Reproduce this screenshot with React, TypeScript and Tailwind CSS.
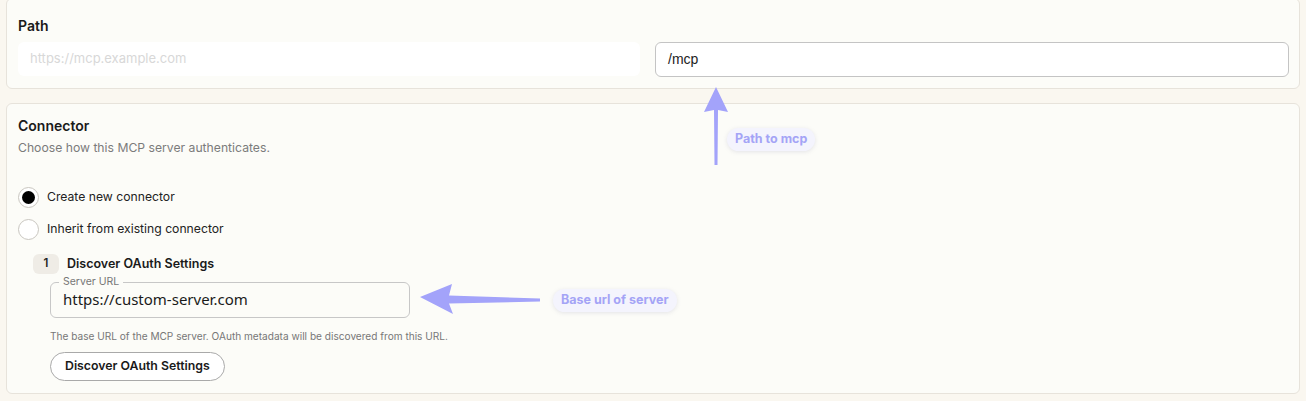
import React from 'react';

const font = { fontFamily: 'Inter, "Noto Sans", sans-serif' };

const Radio: React.FC<{ checked?: boolean; label: string }> = ({ checked, label }) => (
    <label className="flex items-center gap-[8px] h-[20px]">
        <span className="w-[21px] h-[21px] rounded-full border border-[#c9c6c0] bg-white flex items-center justify-center">
            {checked && <span className="w-[13px] h-[13px] rounded-full bg-black" />}
        </span>
        <span className="text-[12.2px] text-[#222]">{label}</span>
    </label>
);

const Note: React.FC<{ text: string; className: string }> = ({ text, className }) => (
    <div className={`absolute px-2 h-[23px] flex items-center rounded-full bg-[#f4f4fd] shadow-[0_1px_4px_rgba(120,120,160,0.18)] text-[12.5px] font-bold text-[#a4a4f6] ${className}`}>
        {text}
    </div>
);

const App: React.FC = () => {
    return (
        <div className="relative w-[1306px] h-[401px] overflow-hidden bg-[#faf7f0] px-[6px]" style={font}>
            {/* Path card */}
            <section className="-mt-[2px] border border-[#e7e3db] rounded-md bg-[#fcfcf8] pl-[11px] pr-[10px] pt-[19px] pb-[11px]">
                <h3 className="text-[14px] font-semibold text-[#1a1a1a] leading-[16px]">Path</h3>
                <div className="mt-[8px] flex gap-[15px]">
                    <div className="w-[622px] h-[34px] rounded-md bg-white flex items-center px-3 text-[13px] text-[#d8d8d8]">
                        https://mcp.example.com
                    </div>
                    <div className="flex-1 h-[35px] rounded-md border border-[#c4c4c4] bg-white flex items-center px-3 text-[14px] text-[#222]" style={{ fontFamily: '"Liberation Sans", Arial, sans-serif' }}>
                        /mcp
                    </div>
                </div>
            </section>

            {/* Connector card */}
            <section className="mt-[14px] border border-[#e7e3db] rounded-md bg-[#fcfcf8] px-[11px] pt-[14px] pb-[12px]">
                <h3 className="text-[14px] font-semibold text-[#1a1a1a] leading-[16px]">Connector</h3>
                <p className="mt-[6px] text-[12.2px] text-[#7b7b7b] leading-[16px]">Choose how this MCP server authenticates.</p>

                <div className="mt-[31px] flex flex-col gap-[12px]">
                    <Radio checked label="Create new connector" />
                    <Radio label="Inherit from existing connector" />
                </div>

                <div className="mt-[15px] pl-[15px]">
                    <div className="flex items-center gap-2">
                        <span className="w-[26px] h-[20px] rounded-md bg-[#efece6] flex items-center justify-center text-[11.5px] font-semibold text-[#222]">1</span>
                        <span className="text-[12.5px] font-semibold text-[#1a1a1a]">Discover OAuth Settings</span>
                    </div>

                    <div className="pl-[17px]">
                        <fieldset className="w-[360px] h-[42px] mt-[2px] border border-[#c7c7c7] rounded-md px-[8px]">
                            <legend className="px-[4px] text-[10.5px] text-[#777] leading-[12px]">Server URL</legend>
                            <div className="pl-[4px] text-[15px] text-[#1a1a1a]" style={{ fontFamily: '"Noto Sans", sans-serif' }}>
                                https://custom-server.com
                            </div>
                        </fieldset>
                        <p className="mt-[11px] text-[10.1px] text-[#777] leading-[14px]">
                            The base URL of the MCP server. OAuth metadata will be discovered from this URL.
                        </p>
                        <button className="mt-[9px] h-[29px] px-[14px] rounded-full border border-[#a9a9a9] bg-white text-[12.3px] font-semibold text-[#1a1a1a]">
                            Discover OAuth Settings
                        </button>
                    </div>
                </div>
            </section>

            {/* annotation arrows */}
            <svg className="absolute left-0 top-0 pointer-events-none" width="1306" height="401">
                <path d="M716 87 L728 112 L718 110 L717.5 165 L714.5 165 L714 110 L704 112 Z" fill="#a3a3fa" />
                <path d="M420 297 L452 284 L449 295.5 L540 298.5 L540 301.5 L449 303.5 L453 314 Z" fill="#a3a3fa" />
            </svg>
            <Note text="Path to mcp" className="left-[727px] top-[128px]" />
            <Note text="Base url of server" className="left-[553px] top-[289px]" />
        </div>
    );
};

export default App;
